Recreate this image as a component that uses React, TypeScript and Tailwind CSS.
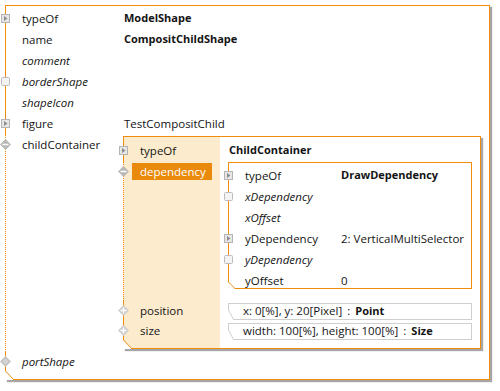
import React from "react";

const OR = "#ef8c0e";

function Expand({ top = "top-[6px]" }: { top?: string }) {
  return (
    <svg width="9" height="9" viewBox="0 0 9 9" className={`absolute left-[-5px] ${top}`}>
      <rect x="0.5" y="0.5" width="8" height="8" fill="#e6e6e6" stroke="#b4b4b4" />
      <path d="M3 2 L6.5 4.5 L3 7 Z" fill="#8c8c8c" />
    </svg>
  );
}

function Box({ top = "top-[6px]" }: { top?: string }) {
  return (
    <svg width="9" height="9" viewBox="0 0 9 9" className={`absolute left-[-5px] ${top}`}>
      <rect x="0.5" y="0.5" width="8" height="8" rx="1" fill="#f3f3f3" stroke="#bcbcbc" />
    </svg>
  );
}

function DiamondMinus({ top = "top-[5px]" }: { top?: string }) {
  return (
    <svg width="11" height="11" viewBox="0 0 11 11" className={`absolute left-[-6px] ${top}`}>
      <path d="M5.5 0 L11 5.5 L5.5 11 L0 5.5 Z" fill="#b8b8b8" />
      <rect x="2.5" y="4.75" width="6" height="1.5" fill="#ffffff" />
    </svg>
  );
}

function DiamondPlus({ top = "top-[4px]" }: { top?: string }) {
  return (
    <svg width="11" height="11" viewBox="0 0 11 11" className={`absolute left-[-6px] ${top}`}>
      <path d="M5.5 0 L11 5.5 L5.5 11 L0 5.5 Z" fill="#cdcdcd" />
      <rect x="2.5" y="4.75" width="6" height="1.5" fill="#ffffff" />
      <rect x="4.75" y="2.5" width="1.5" height="6" fill="#ffffff" />
    </svg>
  );
}

function Diamond({ top = "top-[4px]" }: { top?: string }) {
  return (
    <svg width="11" height="11" viewBox="0 0 11 11" className={`absolute left-[-6px] ${top}`}>
      <path d="M5.5 0 L11 5.5 L5.5 11 L0 5.5 Z" fill="#c4c4c4" />
      <path d="M5.5 2.5 L8.5 5.5 L5.5 8.5 L2.5 5.5 Z" fill="#d4d4d4" />
    </svg>
  );
}

function OuterRow({
  icon,
  label,
  italic,
  value,
  bold,
}: {
  icon?: React.ReactNode;
  label: string;
  italic?: boolean;
  value?: string;
  bold?: boolean;
}) {
  return (
    <div className="relative flex h-[21px] items-center pl-[16px]">
      {icon}
      <span className={`w-[102px] ${italic ? "italic" : ""}`}>{label}</span>
      {value && <span className={bold ? "font-bold text-[11px]" : ""}>{value}</span>}
    </div>
  );
}

function NestedRow({
  icon,
  label,
  italic,
  value,
  bold,
}: {
  icon?: React.ReactNode;
  label: string;
  italic?: boolean;
  value?: string;
  bold?: boolean;
}) {
  return (
    <div className="relative flex h-[21px] items-center pl-[16px]">
      {icon}
      <span className={`w-[96px] ${italic ? "italic" : ""}`}>{label}</span>
      {value && <span className={bold ? "font-bold text-[11px]" : ""}>{value}</span>}
    </div>
  );
}

function ValueBox({ text, type }: { text: string; type: string }) {
  return (
    <div className="relative flex h-[17px] w-[244px] items-center border border-[#cfcfcf] bg-white pl-[14px]">
      <span>{text}</span>
      <span className="px-[5px]">:</span>
      <span className="font-bold text-[11px]">{type}</span>
      <svg width="6" height="10" viewBox="0 0 6 10" className="absolute left-[-1px] bottom-[-1px]">
        <rect width="6" height="10" fill="#ffffff" />
        <line x1="0.5" y1="0" x2="5.5" y2="9.5" stroke="#cfcfcf" />
        <line x1="5" y1="9.5" x2="6" y2="9.5" stroke="#cfcfcf" />
      </svg>
    </div>
  );
}

export default function App() {
  return (
    <div className="h-[391px] w-[500px] bg-white pl-[5px] pt-[5px] font-['Open_Sans',sans-serif] text-[11.5px] text-[#141414]">
      <div className="relative w-[485px] border-b border-r border-t border-[#ef8c0e] bg-white shadow-[2px_2px_1px_rgba(0,0,0,0.35)]">
        <div className="border-l border-[#ef8c0e] pt-[2px]">
          <OuterRow icon={<Expand />} label="typeOf" value="ModelShape" bold />
          <OuterRow label="name" value="CompositChildShape" bold />
          <OuterRow label="comment" italic />
          <OuterRow icon={<Box />} label="borderShape" italic />
          <OuterRow label="shapeIcon" italic />
          <OuterRow icon={<Expand />} label="figure" value="TestCompositChild" />
        </div>

        <div className="flex items-start border-l border-dotted border-[#ef8c0e] pb-[3px]">
          <div className="relative flex h-[21px] w-[117px] items-center pl-[16px]">
            <DiamondMinus />
            <span>childContainer</span>
          </div>

          <div className="relative mt-[2px] w-[358px] border-b border-r border-t border-[#ef8c0e] bg-white shadow-[2px_2px_1px_rgba(0,0,0,0.35)]">
            <div className="flex h-[3px]">
              <div className="w-[97px] border-l border-[#ef8c0e] bg-[#fcebcd]" />
              <div className="flex-1" />
            </div>
            <div className="flex h-[21px]">
              <div className="relative flex w-[97px] items-center border-l border-[#ef8c0e] bg-[#fcebcd] pl-[16px]">
                <Expand />
                <span>typeOf</span>
              </div>
              <div className="flex flex-1 items-center pl-[9px] font-bold text-[11px]">ChildContainer</div>
            </div>
            <div className="flex h-[140px]">
              <div className="w-[97px] border-l border-dotted border-[#ef8c0e] bg-[#fcebcd]">
                <div className="relative flex h-[21px] items-center pl-[8px]">
                  <DiamondMinus />
                  <span className="h-[17px] w-[80px] bg-[#e98a0c] px-[8px] leading-[17px] text-white">dependency</span>
                </div>
              </div>
              <div className="flex-1 pl-[8px] pt-[1px]">
                <div className="relative h-[127px] w-[244px] border border-[#ef8c0e] pt-[2px]">
                  <NestedRow icon={<Expand />} label="typeOf" value="DrawDependency" bold />
                  <NestedRow icon={<Box />} label="xDependency" italic />
                  <NestedRow label="xOffset" italic />
                  <NestedRow icon={<Expand />} label="yDependency" value="2: VerticalMultiSelector" />
                  <NestedRow icon={<Box />} label="yDependency" italic />
                  <NestedRow label="yOffset" value="0" />
                  <svg width="9" height="7" viewBox="0 0 9 7" className="absolute bottom-[-1px] left-[-1px]">
                    <rect width="9" height="7" fill="#ffffff" />
                    <line x1="0.5" y1="0" x2="7" y2="6.5" stroke={OR} />
                    <line x1="6.5" y1="6.5" x2="9" y2="6.5" stroke={OR} />
                  </svg>
                </div>
              </div>
            </div>
            <div className="flex h-[20px]">
              <div className="relative flex w-[97px] items-center border-l border-[#ef8c0e] bg-[#fcebcd] pl-[16px]">
                <DiamondPlus />
                <span>position</span>
              </div>
              <div className="flex flex-1 items-center pl-[8px]">
                <ValueBox text="x: 0[%], y: 20[Pixel]" type="Point" />
              </div>
            </div>
            <div className="flex h-[20px]">
              <div className="relative flex w-[97px] items-center border-l border-[#ef8c0e] bg-[#fcebcd] pl-[16px]">
                <DiamondPlus />
                <span>size</span>
              </div>
              <div className="flex flex-1 items-center pl-[8px]">
                <ValueBox text="width: 100[%], height: 100[%]" type="Size" />
              </div>
            </div>
            <div className="flex h-[7px]">
              <div className="w-[97px] border-l border-[#ef8c0e] bg-[#fcebcd]" />
              <div className="flex-1" />
            </div>
            <svg width="10" height="9" viewBox="0 0 10 9" className="absolute bottom-[-1px] left-0">
              <rect width="10" height="9" fill="#ffffff" />
              <path d="M0 0 L10 0 L10 9 L9 9 Z" fill="#fcebcd" />
              <line x1="0.5" y1="0" x2="8.5" y2="8.5" stroke={OR} />
              <line x1="8" y1="8.5" x2="10" y2="8.5" stroke={OR} />
            </svg>
          </div>
        </div>

        <div className="border-l border-[#ef8c0e] pb-[7px]">
          <div className="relative flex h-[20px] items-center pl-[16px]">
            <Diamond />
            <span className="italic">portShape</span>
          </div>
        </div>

        <svg width="10" height="9" viewBox="0 0 10 9" className="absolute bottom-[-1px] left-0">
          <rect width="10" height="9" fill="#ffffff" />
          <line x1="0.5" y1="0" x2="8.5" y2="8.5" stroke={OR} />
          <line x1="8" y1="8.5" x2="10" y2="8.5" stroke={OR} />
        </svg>
      </div>
    </div>
  );
}
